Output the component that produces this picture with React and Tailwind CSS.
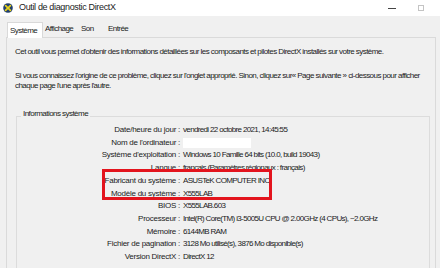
import React from 'react';

const rows = [
    { label: 'Date/heure du jour :', value: 'vendredi 22 octobre 2021, 14:45:55' },
    { label: "Nom de l'ordinateur :", value: null },
    { label: "Système d'exploitation :", value: 'Windows 10 Famille 64 bits (10.0, build 19043)' },
    { label: 'Langue :', value: 'français (Paramètres régionaux : français)' },
    { label: 'Fabricant du système :', value: 'ASUSTeK COMPUTER INC.' },
    { label: 'Modèle du système :', value: 'X555LAB' },
    { label: 'BIOS :', value: 'X555LAB.603' },
    { label: 'Processeur :', value: 'Intel(R) Core(TM) i3-5005U CPU @ 2.00GHz (4 CPUs), ~2.0GHz' },
    { label: 'Mémoire :', value: '6144MB RAM' },
    { label: 'Fichier de pagination :', value: '3128 Mo utilisé(s), 3876 Mo disponible(s)' },
    { label: 'Version DirectX :', value: 'DirectX 12' },
];

const DxIcon = () => (
    <svg width="10" height="10" viewBox="0 0 10 10">
        <circle cx="5" cy="5" r="4.8" fill="#23406e" />
        <path d="M2.6 2.6 L7.4 7.4 M7.4 2.6 L2.6 7.4" stroke="#e6d21c" strokeWidth="1.7" strokeLinecap="round" />
    </svg>
);

export default function App() {
    return (
        <div className="relative w-[440px] h-[268px] overflow-hidden bg-[#f0f0f0] text-[#1b1b1b] text-[8px] tracking-[-0.55px] font-['Liberation_Sans',sans-serif]">
            {/* Title bar */}
            <div className="h-[16px] bg-white flex items-center pl-[3px]">
                <DxIcon />
                <span className="ml-[6px] text-[9px] tracking-[-0.35px] text-[#222]">Outil de diagnostic DirectX</span>
                <div className="ml-auto flex items-center">
                    <div className="w-[8px] h-px bg-[#444]" />
                    <div className="ml-[22px] mr-[16px] w-[6px] h-[6px] border border-[#c4c4c4]" />
                </div>
            </div>

            {/* Tabs */}
            <div className="h-[21px] flex items-end pl-[7px]">
                <div className="h-[16px] w-[36px] bg-white border border-b-0 border-[#d9d9d9] flex items-center pl-[2px] relative top-px">Système</div>
                <div className="h-[16px] flex items-center pl-[2px] w-[38px]">Affichage</div>
                <div className="h-[16px] flex items-center w-[27px]">Son</div>
                <div className="h-[16px] flex items-center">Entrée</div>
            </div>

            {/* Panel */}
            <div className="ml-[6px] mr-[4px] h-[240px] border border-[#dadada] bg-[#f0f0f0] pl-[8px] pr-[6px] pt-[9px]">
                <p className="leading-[10px]">
                    Cet outil vous permet d'obtenir des informations détaillées sur les composants et pilotes DirectX installés sur votre système.
                </p>
                <p className="mt-[14px] leading-[10px]">
                    Si vous connaissez l'origine de ce problème, cliquez sur l'onglet approprié. Sinon, cliquez sur« Page suivante » ci-dessous pour afficher chaque page l'une après l'autre.
                </p>

                <fieldset className="mt-[18px] ml-[1px] mr-[-1px] border border-[#dcdcdc] pb-[20px]">
                    <legend className="ml-[4px] px-[2px] pb-[5px] leading-[10px]">Informations système</legend>
                    <div className="flex flex-col leading-[12.7px]">
                        {rows.map((r) => (
                            <div key={r.label} className="flex">
                                <div className="w-[163px] shrink-0 text-right tracking-[-0.25px]">{r.label}</div>
                                <div className="pl-[3px] whitespace-nowrap tracking-[-0.65px]">
                                    {r.value === null ? (
                                        <span className="inline-block align-middle w-[68px] h-[10px] bg-white" />
                                    ) : (
                                        r.value
                                    )}
                                </div>
                            </div>
                        ))}
                    </div>
                </fieldset>
            </div>

            {/* Red highlight annotation */}
            <div className="absolute left-[102px] top-[169px] w-[170px] h-[31px] border-[3px] border-[#e3141d]" />
        </div>
    );
}
